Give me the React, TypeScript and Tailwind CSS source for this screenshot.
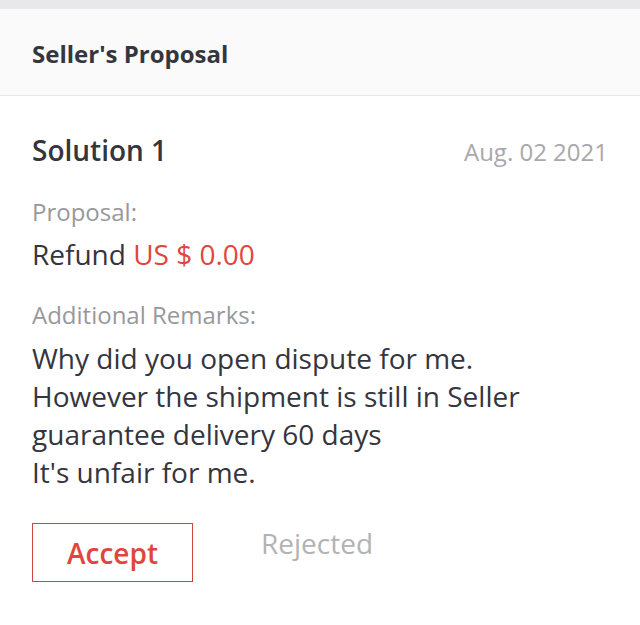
import React from "react";

const App: React.FC = () => {
  return (
    <div className="w-[640px] h-[625px] bg-white font-['Open_Sans',sans-serif] text-[#35353d] overflow-hidden">
      {/* Top strip */}
      <div className="h-[9px] bg-[#e8e8ea]" />

      {/* Header */}
      <div className="h-[87px] bg-[#fafafa] border-b border-[#e6e6e6] px-[32px] flex items-center">
        <h2 className="text-[24px] font-bold text-[#35353d] pt-[4px]">Seller's Proposal</h2>
      </div>

      {/* Body */}
      <div className="px-[32px] pt-[34px]">
        <div className="flex justify-between items-center h-[40px]">
          <span className="text-[28px] font-semibold leading-[40px]">Solution 1</span>
          <span className="text-[24px] text-[#a8a8ab] leading-[40px] pt-[3px]">Aug. 02 2021</span>
        </div>

        <div className="mt-[26px] text-[24px] text-[#98989c] leading-[32px]">Proposal:</div>
        <div className="mt-[6px] text-[28px] leading-[40px]">
          Refund <span className="text-[#e0463c]">US $ 0.00</span>
        </div>

        <div className="mt-[25px] text-[24px] text-[#98989c] leading-[32px]">Additional Remarks:</div>
        <div className="mt-[8px] text-[28px] leading-[38px]">
          <div>Why did you open dispute for me.</div>
          <div>However the shipment is still in Seller</div>
          <div>guarantee delivery 60 days</div>
          <div>It's unfair for me.</div>
        </div>

        <div className="mt-[32px] flex items-start gap-[68px]">
          <button className="w-[161px] h-[59px] border border-[#d0463c] text-[#e0463c] text-[28px] font-semibold flex items-center justify-center">
            Accept
          </button>
          <span className="text-[28px] text-[#b3b3b3] leading-[40px]">Rejected</span>
        </div>
      </div>
    </div>
  );
};

export default App;
